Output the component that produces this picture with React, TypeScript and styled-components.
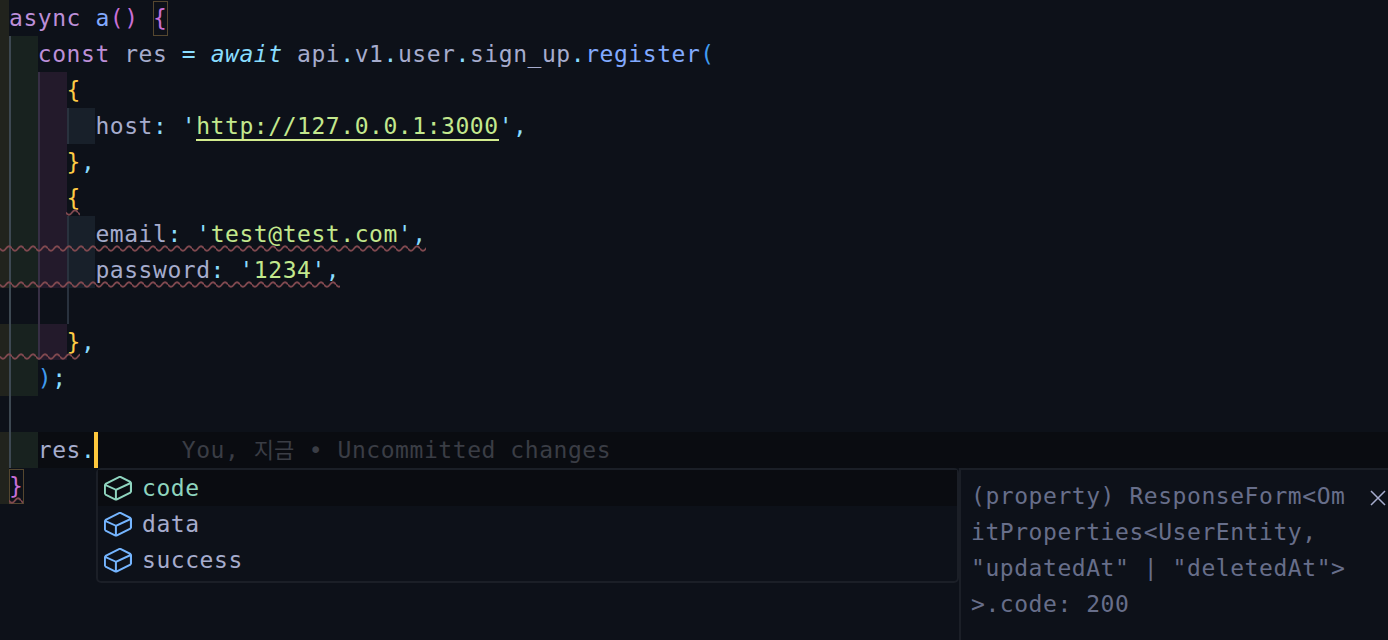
import React from "react";
import styled, { createGlobalStyle } from "styled-components";

const colors = {
  plain: "#a6accd",
  keyword: "#bd8fd8",
  fn: "#82aaff",
  pink: "#c86fd6",
  cyan: "#89ddff",
  yellow: "#ffcb45",
  blue: "#409cf0",
  string: "#c3e88d",
};

type Tone = keyof typeof colors;
type Level = "green" | "purple" | "slate";

const GlobalStyle = createGlobalStyle`
  html, body {
    margin: 0;
    padding: 0;
    background: #0d1119;
    overflow: hidden;
  }
`;

const Editor = styled.div`
  position: relative;
  width: 1388px;
  height: 640px;
  overflow: hidden;
  background: #0d1119;
  font-family: "DejaVu Sans Mono", "Noto Sans CJK KR", monospace;
  font-size: 23px;
  letter-spacing: 0.554px;
  font-variant-ligatures: none;
  color: ${colors.plain};
`;

const Line = styled.div<{ $active?: boolean }>`
  position: relative;
  display: flex;
  height: 36px;
  white-space: pre;
  background: ${(p) => (p.$active ? "#0a0c11" : "transparent")};
`;

const Code = styled.div`
  flex: none;
  height: 36px;
  line-height: 36px;
`;

const Gutter = styled.span<{ $on?: boolean }>`
  flex: none;
  width: 9px;
  background: ${(p) => (p.$on ? "#21231d" : "transparent")};
`;

const guideFill: Record<Level, string> = {
  green: "#18221f",
  purple: "#231a2b",
  slate: "#18202a",
};

const guideLine: Record<Level, string> = {
  green: "#3d4852",
  purple: "#372f45",
  slate: "#29323e",
};

const Indent = styled.span<{ $level: Level; $empty?: boolean }>`
  flex: none;
  box-sizing: border-box;
  width: 28.8px;
  border-left: 2px solid ${(p) => guideLine[p.$level]};
  background: ${(p) => (p.$empty ? "transparent" : guideFill[p.$level])};
`;

const Tok = styled.span<{ $tone: Tone; $italic?: boolean }>`
  color: ${(p) => colors[p.$tone]};
  font-style: ${(p) => (p.$italic ? "italic" : "normal")};
`;

const Link = styled.span`
  color: ${colors.string};
  position: relative;
  &::after {
    content: "";
    position: absolute;
    left: 0;
    right: 0;
    top: 26px;
    height: 2px;
    background: #d3ec8e;
  }
`;

const Bracket = styled.span`
  position: relative;
  color: ${colors.pink};
  &::after {
    content: "";
    box-sizing: border-box;
    position: absolute;
    left: 0;
    top: -4px;
    width: 15px;
    height: 35px;
    border: 1px solid #55472f;
  }
`;

const Caret = styled.span`
  position: absolute;
  left: 94px;
  top: 0;
  width: 4px;
  height: 36px;
  background: #ffc83d;
`;

const Ghost = styled.span`
  margin-left: 86.4px;
  color: #3a3d45;
`;

const Hangul = styled.span`
  font-size: 22px;
  letter-spacing: 0;
  line-height: 1;
`;

const WaveLine = styled.svg<{ $from: number; $to: number }>`
  position: absolute;
  left: ${(p) => p.$from}px;
  bottom: 0;
  width: ${(p) => p.$to - p.$from}px;
  height: 8px;
`;

const PatternDefs = styled.svg`
  position: absolute;
  width: 0;
  height: 0;
`;

const Widget = styled.div`
  position: absolute;
  left: 96px;
  top: 468px;
  right: 0;
  bottom: 0;
  display: flex;
  align-items: flex-start;
`;

const SuggestList = styled.div`
  box-sizing: border-box;
  flex: none;
  width: 863px;
  height: 115px;
  border: 2px solid #1b1f27;
  border-radius: 5px;
`;

const SuggestRow = styled.div<{ $focused?: boolean }>`
  display: flex;
  align-items: center;
  height: 36px;
  padding-left: 4px;
  column-gap: 8px;
  background: ${(p) => (p.$focused ? "#0a0c11" : "transparent")};
  color: ${(p) => (p.$focused ? "#8fd5bf" : colors.plain)};
`;

const FieldIcon = styled.svg<{ $focused?: boolean }>`
  flex: none;
  width: 32px;
  height: 32px;
  fill: ${(p) => (p.$focused ? "#8fd5bf" : "#75b5ff")};
`;

const Details = styled.div`
  position: relative;
  box-sizing: border-box;
  flex: 1;
  height: 172px;
  padding: 8px 0 0 10px;
  border-top: 2px solid #1b1f27;
  border-left: 2px solid #1b1f27;
  color: #676e8a;
`;

const DetailLine = styled.div`
  height: 36px;
  line-height: 36px;
  white-space: pre;
`;

const CloseIcon = styled.svg`
  position: absolute;
  right: 1px;
  top: 19px;
  width: 18px;
  height: 18px;
  stroke: #a6accd;
  stroke-width: 1.5;
`;

const Wave = ({ from, to }: { from: number; to: number }) => (
  <WaveLine $from={from} $to={to}>
    <rect width="100%" height="8" fill="url(#squiggle)" />
  </WaveLine>
);

const Field = ({ focused }: { focused?: boolean }) => (
  <FieldIcon viewBox="0 0 16 16" $focused={focused}>
    <path
      fillRule="evenodd"
      d="M14.45 4.5l-5-2.5h-.9l-7 3.5-.55.89v4.5l.55.9 5 2.5h.9l7-3.5.55-.9v-4.5l-.55-.89zm-8 8.64l-4.5-2.25V7.17l4.5 2v3.97zm.5-4.8L2.29 6.23l6.66-3.34 4.67 2.34-6.67 3.11zm7 1.55l-6.5 3.25V9.21l6.5-3v3.68z"
    />
  </FieldIcon>
);

export default function App() {
  return (
    <Editor>
      <GlobalStyle />
      <PatternDefs>
        <defs>
          <pattern id="squiggle" width="12" height="8" patternUnits="userSpaceOnUse">
            <path d="M0 4.5 Q3 9 6 4.5 Q9 0 12 4.5" fill="none" stroke="#80484f" strokeWidth="1.8" />
          </pattern>
        </defs>
      </PatternDefs>

      <Line>
        <Gutter $on />
        <Code>
          <Tok $tone="keyword">async</Tok> <Tok $tone="fn">a</Tok>
          <Tok $tone="pink">()</Tok> <Bracket>{"{"}</Bracket>
        </Code>
      </Line>
      <Line>
        <Gutter $on />
        <Indent $level="green" />
        <Code>
          <Tok $tone="keyword">const</Tok> res <Tok $tone="cyan">=</Tok>{" "}
          <Tok $tone="cyan" $italic>
            await
          </Tok>{" "}
          api<Tok $tone="cyan">.</Tok>v1<Tok $tone="cyan">.</Tok>user
          <Tok $tone="cyan">.</Tok>sign_up<Tok $tone="cyan">.</Tok>
          <Tok $tone="fn">register</Tok>
          <Tok $tone="blue">(</Tok>
        </Code>
      </Line>
      <Line>
        <Gutter $on />
        <Indent $level="green" />
        <Indent $level="purple" />
        <Code>
          <Tok $tone="yellow">{"{"}</Tok>
        </Code>
      </Line>
      <Line>
        <Gutter $on />
        <Indent $level="green" />
        <Indent $level="purple" />
        <Indent $level="slate" />
        <Code>
          host<Tok $tone="cyan">:</Tok> <Tok $tone="cyan">'</Tok>
          <Link>http://127.0.0.1:3000</Link>
          <Tok $tone="cyan">'</Tok>
          <Tok $tone="cyan">,</Tok>
        </Code>
      </Line>
      <Line>
        <Gutter $on />
        <Indent $level="green" />
        <Indent $level="purple" />
        <Code>
          <Tok $tone="yellow">{"}"}</Tok>
          <Tok $tone="cyan">,</Tok>
        </Code>
      </Line>
      <Line>
        <Gutter $on />
        <Indent $level="green" />
        <Indent $level="purple" />
        <Code>
          <Tok $tone="yellow">{"{"}</Tok>
        </Code>
        <Wave from={66} to={80} />
      </Line>
      <Line>
        <Gutter $on />
        <Indent $level="green" />
        <Indent $level="purple" />
        <Indent $level="slate" />
        <Code>
          email<Tok $tone="cyan">:</Tok> <Tok $tone="cyan">'</Tok>
          <Tok $tone="string">test@test.com</Tok>
          <Tok $tone="cyan">'</Tok>
          <Tok $tone="cyan">,</Tok>
        </Code>
        <Wave from={0} to={426} />
      </Line>
      <Line>
        <Gutter $on />
        <Indent $level="green" />
        <Indent $level="purple" />
        <Indent $level="slate" />
        <Code>
          password<Tok $tone="cyan">:</Tok> <Tok $tone="cyan">'</Tok>
          <Tok $tone="string">1234</Tok>
          <Tok $tone="cyan">'</Tok>
          <Tok $tone="cyan">,</Tok>
        </Code>
        <Wave from={0} to={340} />
      </Line>
      <Line>
        <Gutter />
        <Indent $level="green" $empty />
        <Indent $level="purple" $empty />
        <Indent $level="slate" $empty />
      </Line>
      <Line>
        <Gutter $on />
        <Indent $level="green" />
        <Indent $level="purple" />
        <Code>
          <Tok $tone="yellow">{"}"}</Tok>
          <Tok $tone="cyan">,</Tok>
        </Code>
        <Wave from={0} to={80} />
      </Line>
      <Line>
        <Gutter $on />
        <Indent $level="green" />
        <Code>
          <Tok $tone="blue">)</Tok>
          <Tok $tone="cyan">;</Tok>
        </Code>
      </Line>
      <Line>
        <Gutter />
        <Indent $level="green" $empty />
      </Line>
      <Line $active>
        <Gutter $on />
        <Indent $level="green" />
        <Code>
          res<Tok $tone="cyan">.</Tok>
          <Ghost>
            You, <Hangul>지금</Hangul> • Uncommitted changes
          </Ghost>
        </Code>
        <Caret />
      </Line>
      <Line>
        <Gutter $on />
        <Code>
          <Bracket>{"}"}</Bracket>
        </Code>
        <Wave from={9} to={23} />
      </Line>

      <Widget>
        <SuggestList>
          <SuggestRow $focused>
            <Field focused />
            code
          </SuggestRow>
          <SuggestRow>
            <Field />
            data
          </SuggestRow>
          <SuggestRow>
            <Field />
            success
          </SuggestRow>
        </SuggestList>
        <Details>
          <DetailLine>{"(property) ResponseForm<Om"}</DetailLine>
          <DetailLine>{"itProperties<UserEntity,"}</DetailLine>
          <DetailLine>{'"updatedAt" | "deletedAt">'}</DetailLine>
          <DetailLine>{">.code: 200"}</DetailLine>
          <CloseIcon viewBox="0 0 18 18">
            <path d="M2 2 L16 16 M16 2 L2 16" fill="none" />
          </CloseIcon>
        </Details>
      </Widget>
    </Editor>
  );
}
